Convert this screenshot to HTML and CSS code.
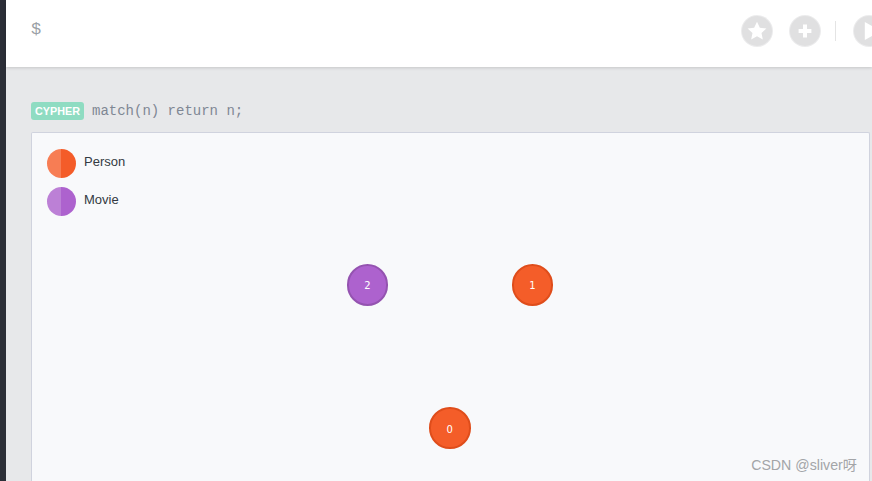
FILE: index.html
```html
<!DOCTYPE html>
<html lang="en">

<head>
    <meta charset="UTF-8">
    <meta name="viewport" content="width=device-width, initial-scale=1.0">
    <title>Neo4j Browser</title>
    <link rel="stylesheet" href="styles.css">
</head>

<body>

    <div class="sidebar"></div>

    <div class="main">
        <!-- Editor bar -->
        <div class="editor">
            <span class="prompt">$</span>
            <div class="actions">
                <button class="action star">
                    <svg viewBox="0 0 24 24" width="24" height="24">
                        <path d="M12 .8l3.4 7.3 7.9.9-5.9 5.4 1.6 7.8-7-4-7 4 1.6-7.8L.7 9l7.9-.9z" />
                    </svg>
                </button>
                <button class="action plus">
                    <svg viewBox="0 0 20 20" width="20" height="20">
                        <path d="M7.5 2h5v5.500H18v5h-5.500V18h-5v-5.500H2v-5h5.500z" />
                    </svg>
                </button>
                <span class="divider"></span>
                <button class="action play">
                    <svg viewBox="0 0 20 20" width="20" height="20">
                        <path d="M2 0l18 10L2 20z" />
                    </svg>
                </button>
            </div>
        </div>

        <div class="content">
            <div class="query">
                <span class="badge">CYPHER</span>
                <code class="statement">match(n) return n;</code>
            </div>

            <div class="frame">
                <ul class="legend">
                    <li class="legend-item">
                        <span class="swatch person"></span>
                        <span class="legend-label">Person</span>
                    </li>
                    <li class="legend-item">
                        <span class="swatch movie"></span>
                        <span class="legend-label">Movie</span>
                    </li>
                </ul>

                <div class="node movie-node node-2">2</div>
                <div class="node person-node node-1">1</div>
                <div class="node person-node node-0">0</div>

                <span class="watermark">CSDN @sliver呀</span>
            </div>
        </div>
    </div>

</body>

</html>
```

FILE: styles.css
```css
html,
body {
    height: 100%;
}

body {
    margin: 0;
    display: flex;
    overflow: hidden;
    background-color: #e7e8ea;
    font-family: "Open Sans", Arial, sans-serif;
}

.sidebar {
    width: 6px;
    flex-shrink: 0;
    background-color: #2b2e37;
}

.main {
    flex: 1;
    min-width: 0;
    display: flex;
    flex-direction: column;
}

.editor {
    height: 67px;
    flex-shrink: 0;
    display: flex;
    justify-content: space-between;
    background-color: #fff;
    box-shadow: 0 1px 3px rgba(0, 0, 0, 0.15);
    position: relative;
}

.prompt {
    margin: 19px 0 0 25px;
    font-family: "Liberation Mono", monospace;
    font-size: 17px;
    line-height: 22px;
    color: #9a9fa6;
}

.actions {
    display: flex;
    align-items: center;
    gap: 18px;
    height: 30px;
    margin: 16px -12px 0 0;
}

.action {
    width: 30px;
    height: 30px;
    padding: 0;
    border: none;
    border-radius: 50%;
    display: flex;
    align-items: center;
    justify-content: center;
    background-color: #e0e0e1;
    box-shadow: 0 0 0 1px #ececed;
    fill: #fff;
}

.star svg {
    width: 20px;
    height: 20px;
}

.plus svg {
    width: 16px;
    height: 16px;
}

.play svg {
    width: 18px;
    height: 18px;
    margin-left: 5px;
}

.divider {
    width: 1px;
    height: 20px;
    margin-left: -3px;
    background-color: #e4e4e4;
}

.content {
    flex: 1;
    min-height: 0;
    display: flex;
    flex-direction: column;
    padding: 35px 2px 0 25px;
}

.query {
    display: flex;
    align-items: center;
    gap: 8px;
    height: 18px;
    margin-bottom: 12px;
}

.badge {
    height: 18px;
    padding: 0 4px;
    border-radius: 3px;
    background-color: #8fdcc2;
    color: #fff;
    font-family: "Liberation Sans", Arial, sans-serif;
    font-size: 10.8px;
    font-weight: bold;
    line-height: 18px;
}

.statement {
    font-family: "Liberation Mono", monospace;
    font-size: 14px;
    color: #7f8794;
}

.frame {
    position: relative;
    flex: 1;
    border: 1px solid #d0d3de;
    border-bottom: none;
    border-radius: 2px 2px 0 0;
    background-color: #f8f9fb;
}

.legend {
    list-style: none;
    margin: 0;
    padding: 16px 0 0 15px;
    display: flex;
    flex-direction: column;
    gap: 9px;
}

.legend-item {
    display: flex;
    gap: 8px;
}

.swatch {
    width: 29px;
    height: 29px;
    border-radius: 50%;
}

.person {
    background: linear-gradient(to right, #f77d54 50%, #f45c29 50%);
}

.movie {
    background: linear-gradient(to right, #bc80d6 50%, #ad62ce 50%);
}

.legend-label {
    font-family: "Liberation Sans", Arial, sans-serif;
    font-size: 13px;
    line-height: 26px;
    color: #333a42;
}

.node {
    position: absolute;
    box-sizing: border-box;
    width: 41.600px;
    height: 41.600px;
    padding-top: 2px;
    border-radius: 50%;
    border: 2px solid;
    display: flex;
    align-items: center;
    justify-content: center;
    color: #fff;
    font-family: "DejaVu Sans", sans-serif;
    font-size: 10px;
}

.movie-node {
    background-color: #ad62ce;
    border-color: #9453b0;
}

.person-node {
    background-color: #f45d29;
    border-color: #df4d1b;
}

.node-2 {
    left: 314.700px;
    top: 131.200px;
}

.node-1 {
    left: 479.700px;
    top: 131.200px;
}

.node-0 {
    left: 397px;
    top: 274.300px;
}

.watermark {
    position: absolute;
    right: 12px;
    top: 321px;
    font-family: "Liberation Sans", "Noto Sans CJK SC", sans-serif;
    font-size: 14.200px;
    color: #a3a5a8;
}
```
